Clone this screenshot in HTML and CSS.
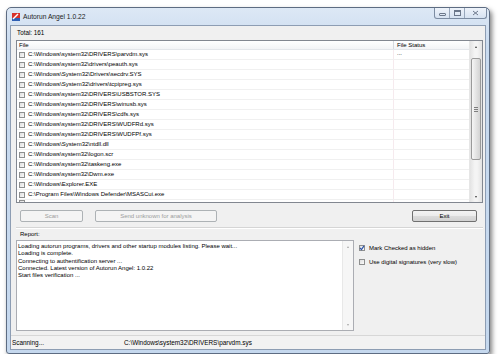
FILE: index.html
```html
<!DOCTYPE html>
<html lang="en">
<head>
    <meta charset="UTF-8">
    <title>Autorun Angel 1.0.22</title>
    <link rel="stylesheet" href="styles.css">
</head>
<body>
    <div class="window">
        <!-- Title bar -->
        <div class="titlebar">
            <svg class="app-icon" viewBox="0 0 8 8">
                <rect x="0" y="0" width="8" height="8" fill="#d8322b"/>
                <rect x="0" y="5" width="8" height="3" fill="#2f5fb3"/>
                <path d="M1 6 L6 1" stroke="#fff" stroke-width="1.4"/>
            </svg>
            <span class="title">Autorun Angel 1.0.22</span>
            <div class="caption-buttons">
                <span class="cap cap-min"><i></i></span>
                <span class="cap cap-max"><i></i></span>
                <span class="cap cap-close">
                    <svg viewBox="0 0 7 6"><path d="M1 1 L6 5 M6 1 L1 5" stroke="#6b778a" stroke-width="1"/></svg>
                </span>
            </div>
        </div>

        <div class="client">
            <div class="total">Total: 161</div>

            <!-- File list -->
            <div class="list">
                <div class="list-main">
                    <div class="list-head">
                        <div class="col-file">File</div>
                        <div class="col-status">File Status</div>
                    </div>
                    <div class="list-body">
                        <div class="row"><div class="col-file"><span class="check"></span>C:\Windows\system32\DRIVERS\parvdm.sys</div><div class="col-status">...</div></div>
                        <div class="row"><div class="col-file"><span class="check"></span>C:\Windows\system32\drivers\peauth.sys</div><div class="col-status"></div></div>
                        <div class="row"><div class="col-file"><span class="check"></span>C:\Windows\System32\Drivers\secdrv.SYS</div><div class="col-status"></div></div>
                        <div class="row"><div class="col-file"><span class="check"></span>C:\Windows\System32\drivers\tcpipreg.sys</div><div class="col-status"></div></div>
                        <div class="row"><div class="col-file"><span class="check"></span>C:\Windows\system32\DRIVERS\USBSTOR.SYS</div><div class="col-status"></div></div>
                        <div class="row"><div class="col-file"><span class="check"></span>C:\Windows\system32\DRIVERS\winusb.sys</div><div class="col-status"></div></div>
                        <div class="row"><div class="col-file"><span class="check"></span>C:\Windows\system32\DRIVERS\cdfs.sys</div><div class="col-status"></div></div>
                        <div class="row"><div class="col-file"><span class="check"></span>C:\Windows\system32\DRIVERS\WUDFRd.sys</div><div class="col-status"></div></div>
                        <div class="row"><div class="col-file"><span class="check"></span>C:\Windows\system32\DRIVERS\WUDFPf.sys</div><div class="col-status"></div></div>
                        <div class="row"><div class="col-file"><span class="check"></span>C:\Windows\System32\ntdll.dll</div><div class="col-status"></div></div>
                        <div class="row"><div class="col-file"><span class="check"></span>C:\Windows\system32\logon.scr</div><div class="col-status"></div></div>
                        <div class="row"><div class="col-file"><span class="check"></span>C:\Windows\system32\taskeng.exe</div><div class="col-status"></div></div>
                        <div class="row"><div class="col-file"><span class="check"></span>C:\Windows\system32\Dwm.exe</div><div class="col-status"></div></div>
                        <div class="row"><div class="col-file"><span class="check"></span>C:\Windows\Explorer.EXE</div><div class="col-status"></div></div>
                        <div class="row"><div class="col-file"><span class="check"></span>C:\Program Files\Windows Defender\MSASCui.exe</div><div class="col-status"></div></div>
                        <div class="row row-partial"><div class="col-file"><span class="check"></span></div><div class="col-status"></div></div>
                    </div>
                </div>
                <div class="vscroll">
                    <div class="arrow up"></div>
                    <div class="thumb"><i></i><i></i><i></i></div>
                    <div class="arrow down"></div>
                </div>
            </div>

            <!-- Buttons -->
            <div class="actions">
                <button class="btn btn-scan" disabled>Scan</button>
                <button class="btn btn-send" disabled>Send unknown for analysis</button>
                <button class="btn btn-exit">Exit</button>
            </div>

            <div class="separator"></div>

            <div class="report-label">Report:</div>
            <div class="report-row">
                <div class="report-box">
                    <div class="report-text">
                        <div>Loading autorun programs, drivers and other startup modules listing. Please wait...</div>
                        <div>Loading is complete.</div>
                        <div>Connecting to authentification server ...</div>
                        <div>Connected. Latest version of Autorun Angel: 1.0.22</div>
                        <div>Start files verification ...</div>
                    </div>
                    <div class="vscroll report-scroll">
                        <div class="arrow up"></div>
                        <div class="arrow down"></div>
                    </div>
                </div>
                <div class="options">
                    <label class="option"><span class="check checked">
                        <svg viewBox="0 0 6 6"><path d="M1 3 L2.5 4.6 L5 0.8" fill="none" stroke="#2e55a8" stroke-width="1.2"/></svg>
                    </span>Mark Checked as hidden</label>
                    <label class="option"><span class="check"></span>Use digital signatures (very slow)</label>
                </div>
            </div>

            <!-- Status bar -->
            <div class="statusbar">
                <span class="status-left">Scanning...</span>
                <span class="status-path">C:\Windows\system32\DRIVERS\parvdm.sys</span>
            </div>
        </div>
    </div>
</body>
</html>
```

FILE: styles.css
```css
body {
    margin: 0;
    background-color: #fff;
    font-family: "Liberation Sans", Arial, sans-serif;
    color: #000;
}
.window {
    box-sizing: border-box;
    width: 484px;
    height: 347px;
    margin: 7px 0 0 6px;
    padding: 0 3px 3px 3px;
    display: flex;
    flex-direction: column;
    border: 1px solid #5d6c82;
    border-radius: 5px 5px 3px 3px;
    background: linear-gradient(#dde8f5, #c8daef 40px, #c5d8ee);
    box-shadow: 2px 3px 5px rgba(0, 0, 0, 0.5);
}
.titlebar {
    height: 17px;
    display: flex;
    align-items: center;
    padding-left: 2px;
}
.app-icon {
    width: 8px;
    height: 8px;
}
.title {
    margin-left: 3px;
    font-size: 6.7px;
    color: #1b1b1b;
}
.caption-buttons {
    align-self: flex-start;
    margin-left: auto;
    margin-right: -1px;
    height: 10px;
    display: flex;
    border: 1px solid #7c8ca2;
    border-top: none;
    border-radius: 0 0 3px 3px;
    background: linear-gradient(#eef3fa, #d6e2f1);
    overflow: hidden;
}
.cap {
    display: flex;
    align-items: center;
    justify-content: center;
    width: 14px;
}
.cap + .cap {
    border-left: 1px solid #98a7bb;
}
.cap-min i {
    width: 5px;
    height: 1px;
    margin-top: 3px;
    border: 1px solid #6b778a;
    border-radius: 1px;
}
.cap-max i {
    width: 5px;
    height: 3px;
    border: 1px solid #6b778a;
    border-top-width: 2px;
}
.cap-close {
    width: 21px;
}
.cap-close svg {
    width: 7px;
    height: 6px;
}
.client {
    flex: 1;
    display: flex;
    flex-direction: column;
    background-color: #f0f0f0;
    border: 1px solid #8d9db3;
    padding: 0 2px 0 5px;
    font-size: 6px;
}
.total {
    height: 14px;
    line-height: 14px;
    padding-left: 1px;
    font-size: 6.3px;
}
.list {
    height: 163px;
    box-sizing: border-box;
    display: flex;
    border: 1px solid #828790;
    background-color: #fff;
}
.list-main {
    flex: 1;
    display: flex;
    flex-direction: column;
    overflow: hidden;
}
.list-head {
    display: flex;
    height: 8px;
    line-height: 8px;
    border-bottom: 1px solid #e3e6ea;
    background: linear-gradient(#fff, #f3f4f6);
    font-size: 6px;
}
.list-head .col-file {
    padding-left: 2px;
    border-right: 1px solid #d6d9de;
}
.col-file {
    box-sizing: border-box;
    width: 377px;
    display: flex;
    align-items: center;
}
.col-status {
    flex: 1;
    padding-left: 3px;
}
.list-body {
    flex: 1;
    overflow: hidden;
}
.row {
    box-sizing: border-box;
    display: flex;
    height: 10px;
    line-height: 9px;
    border-bottom: 1px solid #f0f0f0;
}
.row .col-file {
    padding-left: 2px;
    border-right: 1px solid #f6eaee;
}
.row .col-status {
    line-height: 6px;
}
.row-partial .col-file {
    align-items: flex-start;
    padding-top: 0;
}
.check {
    box-sizing: border-box;
    width: 6px;
    height: 6px;
    margin-right: 3px;
    flex: none;
    display: inline-flex;
    border: 1px solid #8e8f8f;
    background: linear-gradient(135deg, #dedede, #fbfbfb);
}
.check svg {
    width: 6px;
    height: 6px;
    margin: -1px;
}
.vscroll {
    width: 12px;
    display: flex;
    flex-direction: column;
    background: linear-gradient(90deg, #e3e3e3, #f4f4f4 40%, #f4f4f4 60%, #e3e3e3);
    border-left: 1px solid #e6e6e6;
}
.arrow {
    height: 11px;
    display: flex;
    align-items: center;
    justify-content: center;
}
.arrow::after {
    content: "";
    border-left: 1.5px solid transparent;
    border-right: 1.5px solid transparent;
}
.arrow.up::after {
    border-bottom: 2px solid #3c3c3c;
}
.arrow.down {
    margin-top: auto;
}
.arrow.down::after {
    border-top: 2px solid #3c3c3c;
}
.thumb {
    box-sizing: border-box;
    height: 102px;
    margin: 6px 1px 0 1px;
    display: flex;
    flex-direction: column;
    align-items: center;
    justify-content: center;
    gap: 1px;
    border: 1px solid #9a9a9a;
    border-radius: 2px;
    background: linear-gradient(90deg, #f6f6f6, #e4e4e4 50%, #d3d3d3);
}
.thumb i {
    width: 4px;
    height: 1px;
    background-color: #7e7e7e;
}
.actions {
    display: flex;
    margin-top: 7px;
    height: 12px;
}
.btn {
    box-sizing: border-box;
    height: 12px;
    padding: 0;
    font-family: "Liberation Sans", Arial, sans-serif;
    font-size: 6px;
    color: #000;
    border: 1px solid #707070;
    border-radius: 2px;
    background: linear-gradient(#f3f3f3, #ebebeb 50%, #dcdcdc 50%, #d1d1d1);
}
.btn:disabled {
    color: #9c9c9c;
    border-color: #adb2b5;
    background: #f4f4f4;
}
.btn-scan {
    width: 63px;
    margin-left: 4px;
}
.btn-send {
    width: 122px;
    margin-left: 12px;
}
.btn-exit {
    width: 65px;
    margin-left: auto;
    margin-right: 6px;
}
.separator {
    margin-top: 5px;
    height: 1px;
    border-top: 1px solid #d5d5d5;
    background-color: #fff;
}
.report-label {
    height: 11px;
    line-height: 11px;
    padding-left: 4px;
}
.report-row {
    display: flex;
    height: 91px;
}
.report-box {
    box-sizing: border-box;
    width: 338px;
    display: flex;
    border: 1px solid #abadb3;
    background-color: #fff;
}
.report-text {
    flex: 1;
    padding: 2px 0 0 1px;
    font-size: 6px;
    line-height: 7.3px;
}
.report-scroll {
    width: 10px;
    background: #f6f6f6;
    border-left: 1px solid #e8e8e8;
}
.report-scroll .arrow::after {
    border-bottom-color: #a6a6a6;
    border-top-color: #a6a6a6;
}
.options {
    display: flex;
    flex-direction: column;
    gap: 7px;
    padding: 4px 0 0 5px;
}
.option {
    display: flex;
    align-items: center;
    height: 7px;
    font-size: 6px;
}
.option .check {
    margin-right: 4px;
}
.statusbar {
    margin: auto -2px 0 -5px;
    height: 13px;
    display: flex;
    align-items: center;
    padding-left: 1px;
    border-top: 1px solid #d7d7d7;
    background-color: #f2f2f2;
    font-size: 6.4px;
}
.status-path {
    margin-left: 80px;
}
```
